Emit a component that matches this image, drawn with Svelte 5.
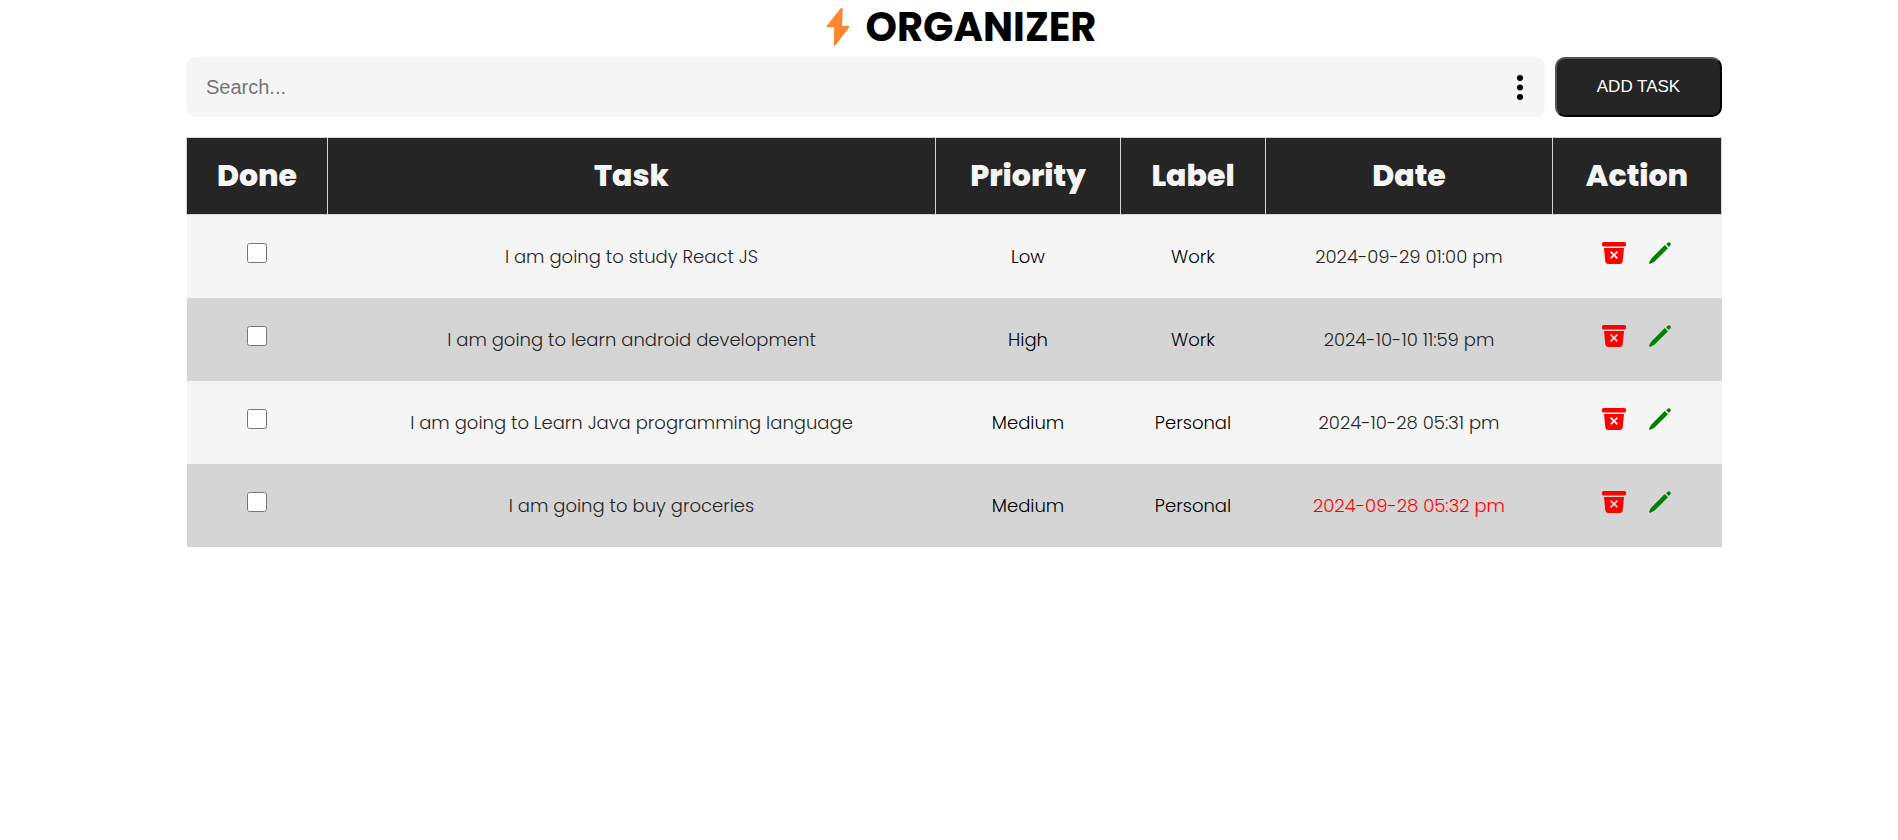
<script>
  let query = $state('');
  let tasks = $state([
    { id: 1, done: false, title: 'I am going to study React JS', priority: 'Low', label: 'Work', date: '2024-09-29 01:00 pm', overdue: false },
    { id: 2, done: false, title: 'I am going to learn android development', priority: 'High', label: 'Work', date: '2024-10-10 11:59 pm', overdue: false },
    { id: 3, done: false, title: 'I am going to Learn Java programming language', priority: 'Medium', label: 'Personal', date: '2024-10-28 05:31 pm', overdue: false },
    { id: 4, done: false, title: 'I am going to buy groceries', priority: 'Medium', label: 'Personal', date: '2024-09-28 05:32 pm', overdue: true }
  ]);
  let visible = $derived(tasks.filter((t) => t.title.toLowerCase().includes(query.toLowerCase())));

  function remove(id) {
    tasks = tasks.filter((t) => t.id !== id);
  }
</script>

<main class="page">
  <header class="brand">
    <svg class="bolt" viewBox="0 0 24 40" aria-hidden="true">
      <path d="M14.500 1.600 1 18.600Q.2 20.200 1.800 20.200H8.200L7.800 37.800Q8.200 39.800 9.600 38.200L23 20.400Q23.900 18.800 22.400 18.800H16.200L16.600 1.800Q16 0 14.500 1.600Z" fill="#ff862e" />
    </svg>
    <h1>ORGANIZER</h1>
  </header>

  <div class="toolbar">
    <div class="search">
      <input type="text" placeholder="Search..." aria-label="Search tasks" bind:value={query} />
      <button class="more" aria-label="Filter options">
        <svg viewBox="0 0 6 25" aria-hidden="true">
          <circle cx="3" cy="3" r="3" /><circle cx="3" cy="12.500" r="3" /><circle cx="3" cy="22" r="3" />
        </svg>
      </button>
    </div>
    <button class="add">ADD TASK</button>
  </div>

  <table>
    <thead>
      <tr>
        <th class="c-done">Done</th>
        <th>Task</th>
        <th class="c-priority">Priority</th>
        <th class="c-label">Label</th>
        <th class="c-date">Date</th>
        <th class="c-action">Action</th>
      </tr>
    </thead>
    <tbody>
      {#each visible as task (task.id)}
        <tr>
          <td><input type="checkbox" aria-label={task.title} bind:checked={task.done} /></td>
          <td class="soft">{task.title}</td>
          <td>{task.priority}</td>
          <td>{task.label}</td>
          <td class="soft" class:overdue={task.overdue}>{task.date}</td>
          <td>
            <div class="actions">
              <button class="delete" aria-label="Delete task" onclick={() => remove(task.id)}>
                <svg viewBox="0 0 24 22" aria-hidden="true">
                  <rect x="0" y="0" width="24" height="4.400" rx="1.500" />
                  <path fill-rule="evenodd" d="M2 6H22L20.700 19.600Q20.400 22 18 22H6Q3.600 22 3.300 19.600ZM8 10.300 10.700 13 8 15.700 9.300 17 12 14.300 14.700 17 16 15.700 13.300 13 16 10.300 14.700 9 12 11.700 9.300 9Z" />
                </svg>
              </button>
              <button class="edit" aria-label="Edit task">
                <svg viewBox="0 0 22 22" aria-hidden="true">
                  <path d="M15.800 3 19 6.200 5.600 19.600Q3.500 21.200 1.200 21.800-.2 22 .2 20.800.8 18.500 2.400 16.400Z" />
                  <path d="M17.200 2.200 18.400 1Q19.800-.2 21.200.8 22.400 2.200 21.200 3.600L19.900 4.900Z" />
                </svg>
              </button>
            </div>
          </td>
        </tr>
      {/each}
    </tbody>
  </table>
</main>

<style>
  :global(body) {
    margin: 0;
    background: #fff;
  }
  .page {
    padding: 0 176px 0 186px;
    color: #000;
    font-family: Poppins, Inter, sans-serif;
  }
  .brand {
    display: flex;
    justify-content: center;
    align-items: center;
    gap: 16px;
    padding: 0 0 3px 14px;
  }
  .bolt {
    width: 24px;
    height: 40px;
  }
  h1 {
    margin: 0;
    font-size: 40px;
    font-weight: 700;
    line-height: 54px;
  }
  .toolbar {
    display: flex;
    gap: 10px;
    margin-bottom: 20px;
  }
  .search {
    display: flex;
    flex: 1;
    align-items: center;
    height: 60px;
    padding: 0 16px 0 20px;
    border-radius: 10px;
    background: #f5f5f5;
    box-sizing: border-box;
  }
  .search input {
    flex: 1;
    min-width: 0;
    padding: 0;
    border: 0;
    outline: 0;
    background: none;
    font-family: "Liberation Sans", Arial, sans-serif;
    font-size: 20px;
  }
  .search input::placeholder {
    color: #757575;
  }
  .more {
    display: flex;
    justify-content: center;
    width: 18px;
    padding: 0;
    border: 0;
    background: none;
  }
  .more svg {
    width: 6px;
    height: 25px;
  }
  .add {
    width: 167px;
    height: 60px;
    border: 2px outset #000;
    border-radius: 10px;
    background: #252525;
    color: #fff;
    font-family: "Liberation Sans", Arial, sans-serif;
    font-size: 17px;
  }
  table {
    width: 100%;
    table-layout: fixed;
    border-collapse: collapse;
    text-align: center;
  }
  th {
    height: 76px;
    padding: 0;
    border: 1px solid #d5d5d5;
    background: #252525;
    color: #f5f5f5;
    font-size: 30px;
    font-weight: 800;
    line-height: 44px;
  }
  .c-done { width: 140px; }
  .c-priority { width: 184px; }
  .c-label { width: 144px; }
  .c-date { width: 286px; }
  .c-action { width: 168px; }
  td {
    height: 83px;
    padding: 0;
    font-size: 18px;
    font-weight: 300;
    line-height: 28px;
  }
  tbody tr {
    background: #f5f5f5;
  }
  tbody tr:nth-child(even) {
    background: #d5d5d5;
  }
  .soft {
    color: #252525;
  }
  .overdue {
    color: #f00;
  }
  td input {
    display: block;
    width: 20px;
    height: 20px;
    margin: 0 auto 8px;
  }
  .actions {
    display: flex;
    justify-content: center;
    gap: 23px;
    margin: 0 2px 8px 0;
  }
  .actions button {
    display: block;
    padding: 0;
    border: 0;
    background: none;
    cursor: pointer;
  }
  .actions svg {
    display: block;
    height: 22px;
    fill: currentColor;
  }
  .delete { color: #f00; }
  .delete svg { width: 24px; }
  .edit { color: #008000; }
  .edit svg { width: 22px; }
</style>
